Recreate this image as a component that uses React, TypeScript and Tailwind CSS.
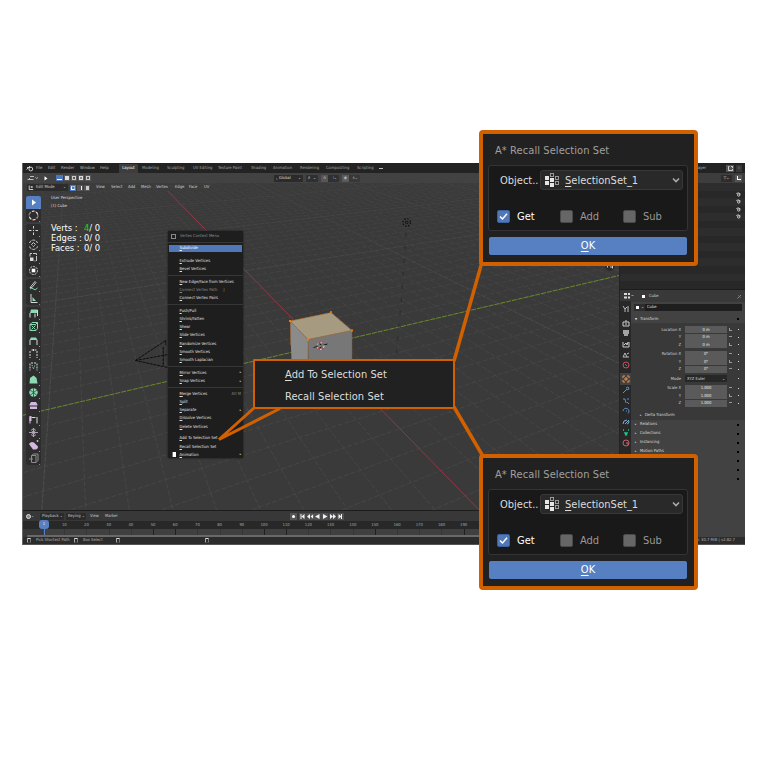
import React from "react";

type P2 = [number, number];

// Perspective floor: origin plus the two vanishing points of the ground axes.
const O: P2 = [318, 345];
const VX: P2 = [70, 92];
const VY: P2 = [1395, 92];
const AX = 0.0415;
const BY = 0.02;

function project(a: number, b: number): P2 {
  const w = 1 + a * AX + b * BY;
  return [
    (O[0] + a * AX * VX[0] + b * BY * VY[0]) / w,
    (O[1] + a * AX * VX[1] + b * BY * VY[1]) / w,
  ];
}

function gridLines(major: boolean) {
  let d = "";
  const seg = (p: P2, q: P2) => {
    d += `M${p[0].toFixed(1)} ${p[1].toFixed(1)}L${q[0].toFixed(1)} ${q[1].toFixed(1)}`;
  };
  for (let b = -60; b <= 110; b++) {
    if (b === 0 || (b % 10 === 0) !== major) continue;
    const a0 = (0.35 - 1 - b * BY) / AX;
    const a1 = (4 - 1 - b * BY) / AX;
    seg(project(a0, b), project(a1, b));
  }
  for (let a = -60; a <= 90; a++) {
    if (a === 0 || (a % 10 === 0) !== major) continue;
    const b0 = (0.35 - 1 - a * AX) / BY;
    const b1 = (4 - 1 - a * AX) / BY;
    seg(project(a, b0), project(a, b1));
  }
  return d;
}

const MINOR = gridLines(false);
const MAJOR = gridLines(true);

function Scene() {
  return (
    <svg className="absolute inset-0 h-full w-full" viewBox="22 183 598 327" preserveAspectRatio="none">
      <defs>
        <linearGradient id="fade" x1="0" y1="183" x2="0" y2="510" gradientUnits="userSpaceOnUse">
          <stop offset="0" stopColor="#fff" stopOpacity="0.4" />
          <stop offset="0.4" stopColor="#fff" stopOpacity="0.8" />
          <stop offset="1" stopColor="#fff" />
        </linearGradient>
        <mask id="m" maskUnits="userSpaceOnUse" x="0" y="180" width="640" height="340">
          <rect x="0" y="180" width="640" height="340" fill="url(#fade)" />
        </mask>
      </defs>
      <rect x="22" y="183" width="598" height="327" fill="#3a3a3a" />
      <g mask="url(#m)" fill="none">
        <path d={MINOR} stroke="#4a4a4a" strokeWidth="0.8" strokeDasharray="5 2" />
        <path d={MAJOR} stroke="#515151" strokeWidth="0.9" strokeDasharray="5 1" />
      </g>
      <path d="M168 191L480 510" stroke="#9c3748" strokeWidth="0.9" />
      <path d="M22 415.5L620 275.5" stroke="#6a8a2a" strokeWidth="1" strokeDasharray="5 1" />
      {/* cube */}
      <path d="M290.5 321L308.500 339.500V362H292z" fill="#8b8b8b" />
      <path d="M308.500 339.500L352.500 330.500V362H309z" fill="#777" />
      <path d="M290.500 321L331.500 312.500L352.500 330.500L308.500 339.500z" fill="#a69a80" stroke="#a86a2c" strokeWidth="0.8" strokeDasharray="4 1" />
      <path d="M291 322V345M308.500 340V360M352.300 331V360" stroke="#9b6a3c" strokeWidth="0.7" />
      <g fill="#ff7a00">
        <rect x="289.500" y="320" width="2" height="2" />
        <rect x="330.700" y="311" width="1.500" height="2.500" />
        <rect x="351.500" y="329.500" width="2" height="2" />
        <rect x="307.500" y="338.500" width="2" height="2" />
      </g>
      {/* 3D cursor */}
      <circle cx="321" cy="346" r="3.500" fill="none" stroke="#e8e8e8" strokeWidth="0.9" strokeDasharray="2 2" />
      <circle cx="321" cy="346" r="3.500" fill="none" stroke="#c8202c" strokeWidth="0.9" strokeDasharray="2 2" strokeDashoffset="2" />
      <path d="M314 347.500l4-1M324 345l4-1M320 344l2 1M320 348l2-1" stroke="#111" strokeWidth="0.9" />
      {/* camera */}
      <path d="M135.500 360.500L166 340.500M135.500 360.500L168 367.500M135.500 360.500L168 354.500M163.500 347V366M166 340.500V345" fill="none" stroke="#0c0c0c" strokeWidth="1" strokeDasharray="3 0.700" />
      {/* lamp */}
      <g fill="none" stroke="#0c0c0c">
        <circle cx="407.300" cy="222.500" r="3.800" strokeWidth="1.200" strokeDasharray="1.500 1.500" />
        <circle cx="407.300" cy="222.500" r="1.300" strokeWidth="0.900" />
        <path d="M406.600 233L402 300L397 354" strokeWidth="0.700" strokeDasharray="4 9" stroke="#222" />
      </g>
      {/* navigation gizmo */}
      <circle cx="611" cy="266" r="5" fill="#2b2b2b" />
      <path d="M608.500 264.500v3M611 267h2.500M613.500 266v2.500" stroke="#ddd" strokeWidth="0.900" />
    </svg>
  );
}

const tiny = "text-[4.15px] leading-none whitespace-nowrap";

function Strip({ items, className = "" }: { items: [string, string][]; className?: string }) {
  return (
    <div className={`flex items-center ${tiny} ${className}`}>
      {items.map(([w, t]) => (
        <span key={t} className={`shrink-0 ${w}`}>{t}</span>
      ))}
    </div>
  );
}

function TopBar() {
  return (
    <div className="flex h-[10px] shrink-0 items-center bg-[#232323] text-[#b8b8b8]">
      <svg className="ml-[4px] h-[7px] w-[8px]" viewBox="0 0 8 7" fill="none" stroke="#ddd" strokeWidth="0.9">
        <path d="M0.500 4.500L4 1M1 2.500h3.500" />
        <circle cx="4.800" cy="4" r="1.900" />
      </svg>
      <Strip className="ml-[2px]" items={[["w-[12px]", "File"], ["w-[13px]", "Edit"], ["w-[19px]", "Render"], ["w-[20px]", "Window"], ["w-[19px]", "Help"]]} />
      <div className={`flex h-[9px] w-[19px] shrink-0 items-center justify-center self-end rounded-t-[1px] bg-[#3d3d3d] text-white ${tiny}`}>Layout</div>
      <Strip
        className="ml-[4px] text-[#a4a4a4]"
        items={[["w-[25px]", "Modeling"], ["w-[26px]", "Sculpting"], ["w-[25px]", "UV Editing"], ["w-[33px]", "Texture Paint"], ["w-[22px]", "Shading"], ["w-[27px]", "Animation"], ["w-[26px]", "Rendering"], ["w-[31px]", "Compositing"], ["w-[22px]", "Scripting"]]}
      />
      <span className="h-px w-[4px] bg-[#bbb]" />
      <div className="ml-auto mr-[3px] flex items-center gap-[2px]">
        <span className={`${tiny} mr-[18px]`}>View Layer</span>
        <span className="flex h-[7px] w-[8px] items-center justify-center bg-[#555]">
          <svg className="h-[5px] w-[5px]" viewBox="0 0 5 5" fill="none" stroke="#eee" strokeWidth="0.8"><path d="M1.500 0.500H0.500v4h4V3M3 0.500h1.500V2" /></svg>
        </span>
        <span className={`flex h-[7px] w-[6px] items-center justify-center bg-[#383838] text-[#888] ${tiny}`}>×</span>
      </div>
    </div>
  );
}

function ToolHeader() {
  return (
    <div className="flex h-[10px] shrink-0 items-center bg-[#424242]">
      <svg className="ml-[5px] h-[6px] w-[11px]" viewBox="0 0 11 6" fill="none" stroke="#ccc" strokeWidth="0.9">
        <path d="M0.500 4.500h6M3 1.500h4M2.500 3v1M8.500 2.500l1.200 1 1.200-1" />
      </svg>
      <svg className="ml-[6px] h-[5px] w-[4px]" viewBox="0 0 4 5"><path d="M0.500 0.300L3.500 2.500L0.500 4.500z" fill="#fff" /></svg>
      <div className="ml-[8px] flex gap-px">
        <span className="flex h-[6px] w-[7px] items-end bg-[#4f76b8] px-px pb-px"><i className="h-px w-full bg-white" /></span>
        {[0, 1, 2, 3].map((i) => (
          <span key={i} className="flex h-[6px] w-[6px] items-center justify-center bg-[#595959]">
            <i className={`h-[4px] w-[4px] ${i === 0 ? "bg-[#ddd]" : i === 2 ? "border border-[#ddd] bg-[#888]" : "border border-dashed border-[#ccc]"}`} />
          </span>
        ))}
      </div>
      <div className={`ml-[183px] flex h-[7px] w-[29px] shrink-0 items-center gap-[2px] rounded-[1px] bg-[#2b2b2b] pl-[2px] text-[#ddd] ${tiny}`}>
        <span>⌞ Global</span><span className="ml-auto mr-[2px]">⌄</span>
      </div>
      <div className={`ml-[3px] flex h-[7px] w-[12px] items-center justify-between rounded-[1px] bg-[#303030] px-[2px] text-[#ddd] ${tiny}`}><span>∂</span><span>⌄</span></div>
      <div className={`ml-[3px] flex h-[7px] w-[18px] items-center justify-between rounded-[1px] bg-[#303030] text-[#ddd] ${tiny}`}>
        <span className="flex h-[7px] w-[7px] items-center justify-center bg-[#565656]">∩</span><span className="mr-[2px]">⁝⌄</span>
      </div>
      <div className={`ml-[3px] flex h-[7px] w-[18px] items-center justify-between rounded-[1px] bg-[#383838] text-[#bbb] ${tiny}`}>
        <span className="flex h-[7px] w-[7px] items-center justify-center bg-[#5b5b5b]">◉</span><span className="mr-[2px]">∧⌄</span>
      </div>
    </div>
  );
}

function ModeHeader() {
  return (
    <div className="flex h-[9px] shrink-0 items-center text-[#ddd]">
      <div className={`ml-[5px] flex h-[7px] w-[41px] shrink-0 items-center rounded-[1px] bg-[#2c2c2c] text-[#ccc] ${tiny}`}>
        <svg className="ml-px h-[6px] w-[6px]" viewBox="0 0 6 6"><path d="M1.200 0.500v4h4" fill="none" stroke="#ddd" strokeWidth="0.900" /><rect x="2.700" y="1" width="2" height="2" fill="#aaa" /></svg>
        <span className="ml-[2px]">Edit Mode</span><span className="ml-auto mr-[2px]">⌄</span>
      </div>
      <div className="ml-[2px] flex gap-px">
        <span className="flex h-[6px] w-[6px] items-center justify-center bg-[#4f76b8]"><i className="h-[4px] w-[4px] border border-b-white border-l-white border-r-[#9bb4e0] border-t-[#9bb4e0]" /></span>
        <span className="flex h-[6px] w-[6px] items-center justify-center bg-[#555]"><i className="h-[4px] w-[3px] border-r border-[#eee]" /></span>
        <span className="flex h-[6px] w-[6px] items-center justify-center bg-[#555]"><i className="h-[4px] w-[3px] bg-[#ccc]" /></span>
      </div>
      <Strip
        className="ml-[6px] text-[#cfcfcf]"
        items={[["w-[15px]", "View"], ["w-[17px]", "Select"], ["w-[13px]", "Add"], ["w-[15px]", "Mesh"], ["w-[19px]", "Vertex"], ["w-[14px]", "Edge"], ["w-[15px]", "Face"], ["w-[8px]", "UV"]]}
      />
    </div>
  );
}

const G = "#8fd8b4";
const W = "#d8d8d8";
const V = "#d3b8e0";

const toolGroups: React.ReactNode[][] = [
  [
    <path d="M5 3.500L9 6.500L5 9.500z" fill="#fff" />,
    <g fill="none" strokeWidth="1.200"><circle cx="6.500" cy="6.500" r="4.300" stroke="#ddd" strokeDasharray="3 1.500" /><circle cx="6.500" cy="6.500" r="4.300" stroke="#c0434b" strokeDasharray="2 4.750" /></g>,
  ],
  [
    <g fill="none" stroke={W} strokeWidth="1"><path d="M6.500 2v2.500M6.500 8.500V11M2 6.500h2.500M8.500 6.500H11" /><rect x="6" y="6" width="1" height="1" fill={W} stroke="none" /></g>,
    <g fill="none" stroke={W} strokeWidth="1"><path d="M2.500 5a4.200 4.200 0 0 1 8 0M2.500 8.500a4.200 4.200 0 0 0 8 0M6.500 4.500l2 2-2 2-2-2z" strokeDasharray="3 1" /></g>,
    <g><path d="M3 6.500h3.500V10H3z" fill={W} /><path d="M3 5.500V2.500h6.500v7.500H7.500" fill="none" stroke={W} strokeWidth="0.900" strokeDasharray="5 1" /></g>,
    <g><circle cx="6.500" cy="6.500" r="4" fill="none" stroke={W} strokeDasharray="2 1" /><rect x="4.700" y="4.700" width="3.600" height="3.600" fill="#fff" /></g>,
  ],
  [
    <g fill="none"><path d="M3 8.500L8 2.500l1 1L5 8.500z" stroke={W} strokeWidth="0.900" /><path d="M3 10q2-2 3.500 0t4-1" stroke={G} /></g>,
    <g><path d="M4 2v8.500h6.500" fill="none" stroke={W} /><path d="M5.500 5l3.500 4H5.500z" fill={G} /></g>,
  ],
  [
    <g><path d="M4 2.500h6.500v3.500H3z" fill={G} /><path d="M3 6v4.500M8 6.500v4M10.500 3v6" stroke={W} fill="none" /></g>,
    <g fill="none" stroke={G}><path d="M3 4.500L5 2.500h5.500v6L9 10.500H3z" /><path d="M4.500 5.500l4 4M8.500 5.500l-4 4M3 4.500h5.500l2-2" /></g>,
    <g><path d="M4 3.500h5l1.500 2.500H2.500z" fill={G} /><path d="M3 6v5M10 6v5" stroke={W} fill="none" /></g>,
    <path d="M3 4v7M10 4v7M4.500 3h5M6.500 2v2" stroke={W} fill="none" strokeDasharray="2 1" />,
    <g fill="none"><path d="M3 3.500v7M10 3.500v7M4 3h5" stroke={W} strokeDasharray="2 1" /><path d="M5 5l1.500 4L8 5" stroke={G} strokeDasharray="1 1" /></g>,
    <path d="M3 5l3.500-2.500L9.500 5l1 5.500h-8z" fill={G} />,
    <g><circle cx="6.500" cy="6.500" r="4.200" fill={G} /><path d="M6.500 6.500V2M6.500 6.500L10 4M6.500 6.500l3.500 3M6.500 6.500V11M6.500 6.500L3 9.500M6.500 6.500L3 4" stroke="#2c4a3c" strokeWidth="0.800" /></g>,
    <path d="M4 3h5l1.500 2.500v1H2.500v-1zM3 7.500h7V10H3z" fill={V} />,
    <g><path d="M3 4v6.500M10 4v6.500M4.500 4.500h4" stroke={W} fill="none" /><rect x="2.500" y="3" width="2" height="5" fill={V} /></g>,
    <g fill="none" stroke="#bba9c4"><path d="M2 6.500h9M6.500 2v9M4 4.500l2.500-2 2.500 2M4 8.500l2.500 2 2.500-2" strokeWidth="0.900" /><circle cx="6.500" cy="6.500" r="1.500" /></g>,
    <g fill={V}><path d="M2 5q2-3 5-1.500l4 4q0 3-3 3h-2z" /><circle cx="10.500" cy="2" r="0.900" /></g>,
    <g fill="none" stroke="#8d8d8d"><path d="M4.500 3.500H9v7H4.500zM4.500 3.500L6.500 2H11v6.500l-2 2M2 7h4" /></g>,
  ],
];
const groupGap = ["mt-0", "mt-[2px]", "mt-[2px]", "mt-[2px]"];

function Toolbar() {
  return (
    <div className="ml-[4px] mt-[4px] flex w-[15px] flex-col">
      {toolGroups.map((g, i) => (
        <div key={i} className={`flex flex-col overflow-hidden rounded-[2px] bg-[#2d2d2d] ${groupGap[i]}`}>
          {g.map((icon, j) => (
            <div key={j} className={`flex h-[13.170px] items-center justify-center ${i === 0 && j === 0 ? "bg-[#5680c2]" : ""}`}>
              <svg className="h-[13px] w-[13px]" viewBox="0 0 13 13">{icon}<rect x="12" y="12" width="1" height="1" fill="#999" /></svg>
            </div>
          ))}
        </div>
      ))}
    </div>
  );
}

function Stats() {
  const rows: [string, string, string][] = [
    ["Verts :", "4", "text-[#00e000]"],
    ["Edges :", "0", "text-white"],
    ["Faces :", "0", "text-white"],
  ];
  return (
    <div className="ml-[10px] mt-[4px] text-white">
      <div className={`${tiny} flex flex-col gap-[3.500px] text-[#ddd]`}>
        <span>User Perspective</span>
        <span>(1) Cube</span>
      </div>
      <div className="mt-[15px] flex flex-col text-[9.300px] leading-[10px]">
        {rows.map(([l, n, c]) => (
          <div key={l} className="flex h-[10px] items-center whitespace-nowrap">
            <span className="w-[33px]">{l}</span>
            <span className={c}>{n}</span>
            <span>/ 0</span>
          </div>
        ))}
      </div>
    </div>
  );
}

const menuGroups: string[][] = [
  ["Extrude Vertices", "Bevel Vertices"],
  ["New Edge/Face from Vertices", "Connect Vertex Path", "Connect Vertex Pairs"],
  ["Push/Pull", "Shrink/Fatten", "Shear", "Slide Vertices", "Randomize Vertices", "Smooth Vertices", "Smooth Laplacian"],
  ["Mirror Vertices", "Snap Vertices"],
  ["Merge Vertices", "Split", "Separate", "Dissolve Vertices", "Delete Vertices"],
  ["Add To Selection Set", "Recall Selection Set", "Animation"],
];
const submenu = ["Mirror Vertices", "Snap Vertices", "Separate", "Animation"];

function ContextMenu() {
  return (
    <div className={`absolute left-[168px] top-[231px] h-[227px] w-[75px] rounded-[1px] bg-[#1e1e1e] text-[#e0e0e0] shadow-[0_0_2px_#111] ${tiny}`}>
      <div className="flex h-[11px] items-center text-[#8f8f8f]">
        <i className="ml-[3px] mr-[4px] h-[5px] w-[5px] border border-dashed border-[#888]" />
        <span>Vertex Context Menu</span>
      </div>
      <div className="h-px bg-[#363636]" />
      <div className="mx-px mt-[2px] flex h-[7px] items-center bg-[#5078b8] pl-[10.500px] text-white"><span><u>S</u>ubdivide</span></div>
      <div className="mt-[4.700px]" />
      {menuGroups.map((g, i) => (
        <div key={i}>
          {i > 0 && (
            <div className={`flex items-center ${i < 5 ? "h-[4.500px]" : "h-[3.500px]"}`}><div className={`h-px w-full ${i < 5 ? "bg-[#363636]" : ""}`} /></div>
          )}
          {g.map((t) => (
            <div key={t} className={`flex h-[8.220px] items-center pr-[2px] ${t === "Connect Vertex Path" ? "text-[#8b8b8b]" : ""}`}>
              <span className="flex w-[11.500px] items-center pl-[4px]">
                {t === "Animation" && <i className="h-[5px] w-[4px] border-l-[1px] border-[#777] bg-white" />}
              </span>
              <span><u>{t[0]}</u>{t.slice(1)}</span>
              {t === "Connect Vertex Path" && <span className="ml-[6px]">J</span>}
              {t === "Merge Vertices" && <span className="ml-auto text-[#888]">Alt M</span>}
              {submenu.includes(t) && <span className="ml-auto text-[3px]">▸</span>}
            </div>
          ))}
        </div>
      ))}
    </div>
  );
}

const ticks = Array.from({ length: 19 }, (_, i) => (i + 1) * 10);

function Timeline() {
  return (
    <div className="relative flex h-[27px] shrink-0 flex-col border-t border-[#1c1c1c] bg-[#383838]">
      <div className="flex h-[10px] shrink-0 items-center">
        <div className="ml-[4px] flex w-[12px] items-center"><i className="h-[5px] w-[5px] rounded-full border-[1px] border-[#ddd] bg-[#888]" /><span className={`${tiny} text-[#ccc]`}>⌄</span></div>
        <Strip
          className="ml-[2px] text-[#c8c8c8]"
          items={[["flex h-[7px] w-[24px] items-center rounded-[1px] bg-[#2b2b2b] pl-[2px] mr-[2px]", "Playback ⌄"], ["flex h-[7px] w-[20px] items-center rounded-[1px] bg-[#2b2b2b] pl-[2px] mr-[4px]", "Keying ⌄"], ["w-[15px]", "View"], ["w-[18px]", "Marker"]]}
        />
        <div className="ml-[167px] flex items-center gap-[2px]">
          <span className="flex h-[7px] w-[7px] items-center justify-center bg-[#555]"><i className="h-[3px] w-[3px] rounded-full bg-white" /></span>
          <svg className="h-[7px] w-[45px]" viewBox="0 0 45 7">
            <rect width="45" height="7" fill="#505050" />
            <g fill="#f2f2f2">
              <path d="M1.500 1h1v5h-1zM5.500 1v5L2.500 3.500zM11 1v5L8 3.500zM14.500 1v5L11.500 3.500zM20.500 1v5L16 3.500zM24 1v5l4.500-2.500zM31 1v5l3-2.500zM34 1v5l3-2.500zM39.500 1v5l3-2.500zM42 1h1v5h-1z" />
            </g>
            <path d="M7 0v7M14.500 0v7M22 0v7M29.500 0v7M37.500 0v7" stroke="#383838" strokeWidth="0.600" />
          </svg>
        </div>
      </div>
      <div className={`flex h-[8px] shrink-0 items-center bg-[#282828] pl-[31.200px] text-[#a8a8a8] ${tiny}`}>
        {ticks.map((t) => <span key={t} className="w-[22.200px] shrink-0 text-center">{t}</span>)}
      </div>
      <div className="flex h-[6px] shrink-0 pl-[20px]">
        {[...ticks, 200].map((t) => (
          <i key={t} className={`h-full w-[22.200px] shrink-0 border-l ${[60, 70, 110, 120, 160, 200].includes(t) ? "border-[#202020]" : "border-[#363636]"} bg-[#404040]`} />
        ))}
      </div>
      <div className="ml-[5px] h-[3px] rounded-[1px] bg-[#696969]" />
      <div className={`absolute left-[17px] top-[9px] flex h-[9px] w-[10px] items-center justify-center rounded-[3px] bg-[#5680c2] text-white ${tiny}`}>1</div>
      <div className="absolute left-[22px] top-[17px] h-[7px] w-px bg-[#5680c2]" />
    </div>
  );
}

function Mouse() {
  return <i className="h-[5px] w-[4px] shrink-0 rounded-[1px] border border-b-[#444] border-l-[#aaa] border-r-[#777] border-t-[#ddd]" />;
}

function StatusBar() {
  return (
    <div className={`flex h-[8px] shrink-0 items-center border-b border-[#555] bg-[#2c2c2c] text-[#b5b5b5] ${tiny}`}>
      <span className="ml-[5px] flex w-[47px] items-center gap-[5px]"><Mouse />Pick Shortest Path</span>
      <span className="flex w-[42px] items-center gap-[5px]"><Mouse />Box Select</span>
      <span className="flex w-[89px]"><Mouse /></span>
      <Mouse />
      <span className="ml-auto mr-[10px]">Mem: 30.7 MiB | v2.82.7</span>
    </div>
  );
}

function Outliner() {
  return (
    <div className="flex h-[116px] shrink-0 flex-col overflow-hidden bg-[#282828]">
      <div className="flex h-[10px] shrink-0 items-center justify-end gap-[3px] bg-[#3d3d3d] pr-[3px]">
        <span className={`flex h-[7px] w-[11px] items-center justify-center bg-[#2d2d2d] text-[#ddd] ${tiny}`}>▽⌄</span>
        <span className="flex h-[7px] w-[7px] items-center justify-center bg-[#555]"><i className="h-[4px] w-[4px] border-b border-l border-white" /></span>
      </div>
      {Array.from({ length: 14 }, (_, i) => (
        <div key={i} className={`flex h-[7.550px] shrink-0 items-center justify-end pr-[4px] ${i % 2 ? "bg-[#282828]" : "bg-[#2d2d2d]"}`}>
          {i > 0 && i < 5 && (
            <svg className="h-[5px] w-[5px]" viewBox="0 0 5 5" fill="none" stroke="#e4e4e4" strokeWidth="0.800"><path d="M0.300 1.500q2-1.500 4.200 0.500" /><circle cx="2.700" cy="3" r="1.200" /></svg>
          )}
        </div>
      ))}
    </div>
  );
}

const tabs: [string, string, React.ReactNode][] = [
  ["mt-[1px] h-[14px]", "#bbb", <path d="M1 1l2 3v3M3 4l2-2M6 1v6" />],
  ["mt-[1px] h-[11px]", "#ccc", <path d="M1 3h6v4H1zM3 2h2M3 5h2" />],
  ["h-[10.500px]", "#ccc", <path d="M1 2h6M1 4h6M2 6h4" strokeWidth="1.500" />],
  ["h-[10.500px]", "#ccc", <path d="M1 2v5h6V2M2 5l2-2 1 2 1-3" />],
  ["h-[11px]", "#bbb", <path d="M1 6l2-4 2 4zM5 3l2-1M6 5v2" />],
  ["h-[10px]", "#c2515c", <path d="M1 4a3 3 0 1 1 6 0 3 3 0 1 1-6 0M3 3l2 2" />],
  ["mt-[3px] h-[12px] bg-[#424242]", "#e8904a", <path d="M1 3V1h2M5 1h2v2M7 5v2H5M3 7H1V5M3 3h2v2H3z" />],
  ["h-[10px]", "#5f8fce", <path d="M1 7l4-4M4 2q2-2 3 0l-1 2-2-1" />],
  ["h-[11px]", "#5f8fce", <path d="M1 2h2l1 4M5 2h2M5 5l2 2" />],
  ["h-[10.500px]", "#5f8fce", <path d="M1 4a3 3 0 1 1 5 2.500M4 4h1" />],
  ["h-[10.500px]", "#7eaad8", <path d="M1 6q0-4 4-4M3 6l4-4M5 6q2 0 2-3" />],
  ["h-[10.500px]", "#1fc48c", <path d="M1 2h1M6 2h1M3 5l1 2 1-2z" strokeWidth="1.500" />],
  ["h-[11px]", "#c8606c", <path d="M1 4a3 3 0 1 1 6 0 3 3 0 1 1-6 0M4 4h2v2" />],
];

function FieldRow({ label, value, lock = true }: { label: string; value: string; lock?: boolean }) {
  return (
    <div className="flex h-[7.500px] items-center">
      <span className="w-[50px] text-right text-[#d5d5d5]">{label}</span>
      <span className="ml-[4px] flex h-[7px] w-[42px] items-center justify-center bg-[#5a5a5a] text-[#f0f0f0]">{value}</span>
      <i className={`ml-[2px] h-[3px] w-[3px] border-[#999] ${lock ? "border-b border-l" : "border-t"}`} />
      <i className="ml-[6px] h-px w-px bg-[#ddd]" />
    </div>
  );
}

function Properties() {
  return (
    <div className={`flex min-h-0 flex-1 flex-col border-t border-[#1c1c1c] bg-[#424242] ${tiny}`}>
      <div className="flex h-[12px] shrink-0 items-center bg-[#393939] text-[#ccc]">
        <svg className="ml-[4px] h-[6px] w-[10px]" viewBox="0 0 10 6"><path d="M0 0h3v2H0zM4 0h2v2H4zM0 3.500h3v2H0zM4 3.500h2v2H4z" fill="#ddd" /><path d="M7.500 2l1 1 1-1" fill="none" stroke="#ccc" strokeWidth="0.700" /></svg>
        <i className="ml-[8px] h-[3px] w-[3px] bg-white" />
        <span className="ml-[4px]">Cube</span>
        <svg className="ml-auto mr-[3px] h-[5px] w-[5px]" viewBox="0 0 5 5"><path d="M0.500 4.500L4 1M1.500 1.500l2 2" fill="none" stroke="#888" /></svg>
      </div>
      <div className="flex min-h-0 flex-1">
        <div className="-mt-px flex w-[11px] shrink-0 flex-col bg-[#282828]">
          {tabs.map(([c, color, p], i) => (
            <div key={i} className={`flex shrink-0 items-center justify-center ${c}`}>
              <svg className="h-[8px] w-[8px]" viewBox="0 0 8 8" fill="none" stroke={color} strokeWidth="1">{p}</svg>
            </div>
          ))}
        </div>
        <div className="min-w-0 flex-1">
          <div className="ml-[3px] mt-[2px] flex h-[7px] w-[108px] items-center bg-[#1e1e1e] text-[#ddd]">
            <span className="flex h-full w-[11px] items-center gap-[2px] bg-[#2d2d2d] pl-[2px]"><i className="h-[3px] w-[3px] bg-white" />⌄</span>
            <span className="ml-[2px]">Cube</span>
          </div>
          <div className="mt-[4px] flex h-[8px] items-center text-[#ddd]">
            <span className="ml-[4px] w-[5px] text-[3px]">▼</span><span>Transform</span><i className="ml-auto mr-[6px] h-[2px] w-[2px] bg-black" />
          </div>
          <div className="flex flex-col bg-[#393939] pt-[3px]">
            <FieldRow label="Location X" value="0 m" />
            <FieldRow label="Y" value="0 m" lock={false} />
            <FieldRow label="Z" value="0 m" />
            <div className="h-[2px]" />
            <FieldRow label="Rotation X" value="0°" lock={false} />
            <FieldRow label="Y" value="0°" />
            <FieldRow label="Z" value="0°" lock={false} />
            <div className="my-[2px] flex h-[7.500px] items-center">
              <span className="w-[50px] text-right text-[#d5d5d5]">Mode</span>
              <span className="ml-[4px] flex h-[7px] w-[42px] items-center justify-between bg-[#272727] px-[2px] text-[#ddd]"><span>XYZ Euler</span><span>⌄</span></span>
              <i className="ml-[11px] h-px w-px bg-[#ddd]" />
            </div>
            <FieldRow label="Scale X" value="1.000" lock={false} />
            <FieldRow label="Y" value="1.000" />
            <FieldRow label="Z" value="1.000" lock={false} />
            <div className="mt-[3px] flex h-[10px] items-center text-[#ddd]"><span className="ml-[9px] w-[5px] text-[3px]">▸</span>Delta Transform</div>
          </div>
          {["Relations", "Collections", "Instancing", "Motion Paths", "Motion", "Viewport", "Custom"].map((t) => (
            <div key={t} className="flex h-[9px] items-center text-[#ddd]">
              <span className="ml-[4px] w-[5px] text-[3px]">▸</span>{t}<i className="ml-auto mr-[6px] h-[2px] w-[2px] bg-black" />
            </div>
          ))}
        </div>
      </div>
    </div>
  );
}

function BlenderWindow() {
  return (
    <div className="ml-[22px] flex h-[382px] w-[723px] flex-col overflow-hidden bg-[#232323]">
      <TopBar />
      <div className="flex min-h-0 flex-1">
        <div className="flex w-[597px] shrink-0 flex-col overflow-hidden">
          <ToolHeader />
          <div className="relative min-h-0 flex-1 overflow-hidden">
            <Scene />
            <div className="relative flex flex-col">
              <ModeHeader />
              <div className="flex">
                <Toolbar />
                <Stats />
              </div>
            </div>
          </div>
          <Timeline />
        </div>
        <div className="ml-px flex min-w-0 flex-1 flex-col">
          <Outliner />
          <Properties />
        </div>
      </div>
      <StatusBar />
    </div>
  );
}

function Check({ label, on = false, width }: { label: string; on?: boolean; width: string }) {
  return (
    <div className={`flex items-center ${width}`}>
      <span className={`flex h-[13px] w-[13px] items-center justify-center rounded-[2px] border ${on ? "border-[#3d5f9c] bg-[#5078b8]" : "border-[#4a4a4a] bg-[#666]"}`}>
        {on && <svg className="h-[9px] w-[9px]" viewBox="0 0 9 9"><path d="M1 4.500L3.500 7L8 1.800" fill="none" stroke="#fff" strokeWidth="1.500" /></svg>}
      </span>
      <span className={`ml-[7px] ${on ? "text-white" : "text-[#989898]"}`}>{label}</span>
    </div>
  );
}

function SetIcon() {
  return (
    <svg className="h-[14px] w-[15px] shrink-0" viewBox="0 0 15 14">
      <g fill="#e6e6e6">
        <rect x="0" y="3" width="4" height="4" /><rect x="0" y="8" width="4" height="4" />
        <rect x="5" y="5" width="4" height="4" /><rect x="5" y="10" width="4" height="4" />
      </g>
      <g fill="none" stroke="#999">
        <rect x="5.500" y="0.500" width="3" height="3" /><rect x="10.500" y="3.500" width="3" height="3" /><rect x="10.500" y="8.500" width="3" height="3" />
      </g>
    </svg>
  );
}

function RecallDialog({ place }: { place: string }) {
  return (
    <div className={`absolute left-[479px] h-[136px] w-[219px] rounded-[4px] border-4 border-[#d06000] bg-[#212121] px-[5px] text-[11px] leading-none whitespace-nowrap ${place}`}>
      <div className="flex h-[31px] items-center pl-[7px] pt-px tracking-[0.080px] text-[#a0a0a0]"><span>A* Recall Selection Set</span></div>
      <div className="h-[66px] w-[200px] rounded-[3px] border border-[#343434] bg-[#191919]">
        <div className="ml-[11px] mt-[4px] flex h-[20px] items-center text-[#dcdcdc]">
          <span className="w-[40px]">Object..</span>
          <div className="flex h-[20px] w-[143px] items-center rounded-[3px] border border-[#383838] bg-[#292929] pl-[4px] pr-[2px]">
            <SetIcon />
            <span className="ml-[5px]"><span className="underline decoration-1 underline-offset-2">S</span>electionSet_1</span>
            <svg className="ml-auto h-[6px] w-[8px]" viewBox="0 0 8 6"><path d="M1 1.500l3 3 3-3" fill="none" stroke="#aaa" strokeWidth="1.600" /></svg>
          </div>
        </div>
        <div className="ml-[8px] mt-[19.500px] flex h-[13px] items-center">
          <Check label="Get" on width="w-[63px]" />
          <Check label="Add" width="w-[63px]" />
          <Check label="Sub" width="w-[50px]" />
        </div>
      </div>
      <div className="ml-px mt-[6px] flex h-[18px] w-[198px] items-center justify-center rounded-[2px] bg-[#5680c2] text-white">
        <span className="-mt-px"><span className="underline decoration-1 underline-offset-2">O</span>K</span>
      </div>
    </div>
  );
}

export default function App() {
  return (
    <div className="relative h-[768px] w-[768px] overflow-hidden bg-white pt-[163px] font-['DejaVu_Sans_Condensed','DejaVu_Sans',sans-serif] font-stretch-condensed">
      <BlenderWindow />
      <div className="absolute left-[22px] top-[163px] h-[382px] w-px bg-[#666]" />
      <ContextMenu />
      <svg className="absolute inset-0 h-full w-full" viewBox="0 0 768 768" fill="none" stroke="#d06000">
        <path d="M482 262L454 361M454 407L484 458" strokeWidth="3.500" />
        <path d="M254 408L219 439.500L280 408.500" strokeWidth="3" />
      </svg>
      <div className="absolute left-[253px] top-[359px] flex h-[50px] w-[202px] flex-col rounded-[1px] border-2 border-[#d06000] bg-[#212121] pl-[30px] pt-[2px] text-[11px] leading-none whitespace-nowrap tracking-[0.060px] text-[#dedede]">
        <div className="flex h-[22px] items-center"><span><span className="underline decoration-1 underline-offset-2">A</span>dd To Selection Set</span></div>
        <div className="flex h-[22px] items-center"><span>Recall Selection Set</span></div>
      </div>
      <RecallDialog place="top-[130px]" />
      <RecallDialog place="top-[454px]" />
    </div>
  );
}
